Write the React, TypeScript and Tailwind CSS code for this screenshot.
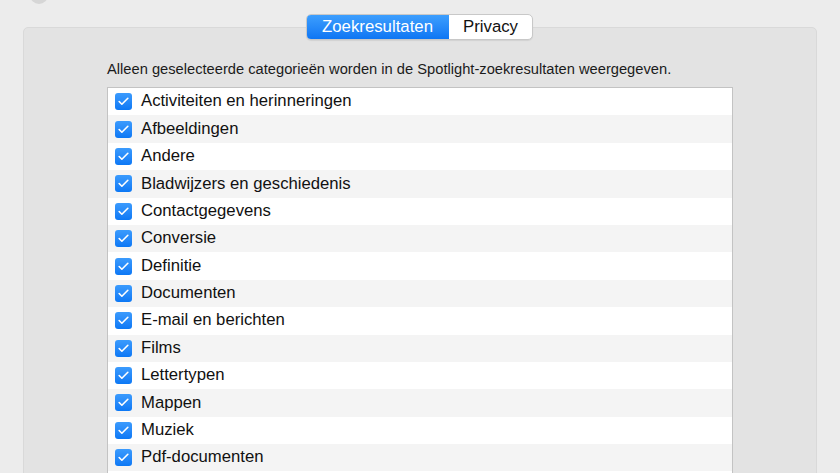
import { Check } from "lucide-react";

const items = [
  "Activiteiten en herinneringen",
  "Afbeeldingen",
  "Andere",
  "Bladwijzers en geschiedenis",
  "Contactgegevens",
  "Conversie",
  "Definitie",
  "Documenten",
  "E-mail en berichten",
  "Films",
  "Lettertypen",
  "Mappen",
  "Muziek",
  "Pdf-documenten",
];

const font = { fontFamily: '"Helvetica Neue", "Liberation Sans", Arial, sans-serif' };

export default function App() {
  return (
    <div
      className="w-[840px] h-[473px] overflow-hidden bg-[#ececec] relative"
      style={font}
    >
      {/* partly visible control above the view */}
      <div className="absolute left-[30px] top-[-14px] w-[18px] h-[18px] rounded-full bg-[#d6d6d6]" />

      <div className="relative pt-[27px] px-[23px]">
        <div className="h-[480px] bg-[#e3e3e3] border border-[#d9d9d9] rounded-[5px] pt-[32px] pl-[83px] pr-[83px]">
          <p className="text-[14.7px] text-[#1b1b1b] leading-[18px] mb-[9px]">
            Alleen geselecteerde categorieën worden in de Spotlight-zoekresultaten weergegeven.
          </p>
          <div className="w-[626px] bg-white border border-[#c3c3c3]">
            {items.map((label, i) => (
              <div
                key={label}
                className={`h-[27.4px] flex items-center pl-[7px] ${
                  i % 2 === 0 ? "bg-white" : "bg-[#f4f4f4]"
                }`}
              >
                <span className="w-[17px] h-[17px] rounded-[3px] bg-gradient-to-b from-[#3b9bfd] to-[#0b78f5] flex items-center justify-center">
                  <Check className="w-[13px] h-[13px] text-white" strokeWidth={3} />
                </span>
                <span className="ml-[9px] text-[16.7px] text-[#111] leading-none">{label}</span>
              </div>
            ))}
            <div className="h-[27.4px] bg-white" />
          </div>
        </div>

        {/* segmented control */}
        <div className="absolute top-[14px] left-[306px] flex h-[26px] rounded-[5px] border border-[#c8c8c8] bg-white shadow-[0_1px_1px_rgba(0,0,0,0.08)] overflow-hidden">
          <div className="w-[143px] -ml-px -my-px h-[26px] rounded-l-[5px] bg-gradient-to-b from-[#3ea0fe] to-[#0a74f3] text-white text-[16.8px] flex items-center justify-center">
            Zoekresultaten
          </div>
          <div className="w-[83px] text-[#111] text-[16.8px] flex items-center justify-center">
            Privacy
          </div>
        </div>
      </div>
    </div>
  );
}
